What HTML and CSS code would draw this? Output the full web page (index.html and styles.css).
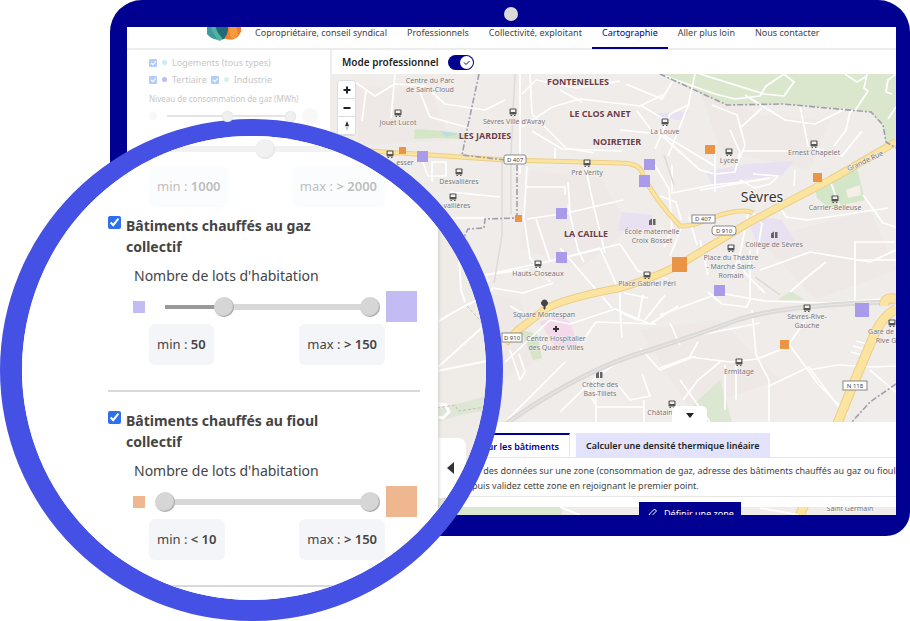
FILE: index.html
```html
<!DOCTYPE html>
<html lang="fr">
<head>
<meta charset="utf-8">
<title>Cartographie</title>
<link rel="stylesheet" href="styles.css">
</head>
<body>
<div class="stage">
  <div class="laptop">
    <span class="camera"></span>
    <div class="screen">
      <header class="header">
        <svg class="logo" viewBox="0 0 34 14" aria-hidden="true">
          <circle cx="12" cy="-2" r="15" fill="#3e9a9c"/>
          <circle cx="23" cy="1" r="11.500" fill="#f07f2c"/>
          <path d="M17-9A15 15 0 0 1 16 12.400A11.500 11.500 0 0 1 17-9" fill="#236a78"/>
          <path d="M24-4Q20 6 25 12A12 12 0 0 0 31 8L29-2" fill="#f59b3e"/>
          <path d="M6 0Q9 8 14 13" stroke="#4fb3a0" stroke-width="4" fill="none"/>
        </svg>
        <nav class="nav">
          <a href="#">Copropriétaire, conseil syndical</a>
          <a href="#">Professionnels</a>
          <a href="#">Collectivité, exploitant</a>
          <a href="#" class="current">Cartographie</a>
          <a href="#">Aller plus loin</a>
          <a href="#">Nous contacter</a>
        </nav>
      </header>
      <div class="workspace">
        <aside class="sidebar">
          <div class="checks">
            <label><input type="checkbox" checked><i class="dot sky"></i>Logements (tous types)</label>
          </div>
          <div class="checks">
            <label><input type="checkbox" checked><i class="dot indigo"></i>Tertiaire</label>
            <label><input type="checkbox" checked><i class="dot mint"></i>Industrie</label>
          </div>
          <p class="side-label">Niveau de consommation de gaz (MWh)</p>
          <div class="side-slider">
            <i class="ring small"></i>
            <div class="dual thin">
              <input type="range" aria-label="Consommation minimale" min="0" max="100" value="48">
              <input type="range" aria-label="Consommation maximale" min="0" max="100" value="100">
            </div>
            <i class="ring"></i>
          </div>
        </aside>
        <main class="main">
          <div class="mode">
            <label for="pro">Mode professionnel</label>
            <input id="pro" class="toggle" type="checkbox" role="switch" checked>
          </div>
          <section class="map">
            <svg class="map-art" viewBox="332 74 564 441" preserveAspectRatio="xMidYMid slice">
              <defs>
                <g id="bus"><rect x="-3.500" y="-3.500" width="7" height="6" rx="1" fill="#555"/><rect x="-2.300" y="-2.500" width="4.600" height="2.500" fill="#f3efea"/><path d="M-2.500 3.500h1.500M1 3.500h1.500" stroke="#555"/></g>
                <g id="school"><path d="M-3-1.500L0-3.500V3H-3zM1-3h2.500v6H1z" fill="#666"/></g>
              </defs>
              <rect x="332" y="74" width="564" height="441" fill="#f0ece9"/>
              <g fill="#eee8e6">
                <path d="M530 170l70 8 30 50-50 40-60-20zM700 90l60 25 70 5-20 50-90-20zM470 290l50 10 20 60-60 30zM640 330l80-10 60 60-90 30zM760 240l110-30 26 60-80 30zM350 85l80 5 20 50-90 5z"/>
              </g>
              <g fill="#e7e1f2">
                <path d="M706 172l40-8 48-3-12 14-40 5-28 8zM622 212l30 3 2 14-36 2zM757 216l25 4 13 22-36 6-8-20zM650 114l40-3-8 10z"/>
              </g>
              <path d="M540 322l20-7 11 8 7 25-20 3z" fill="#f3d9ea"/>
              <path d="M521 330l16 4 5 24-9 2z" fill="#d5e5c5"/>
              <path d="M658 74L727 105L783 104L871 112L883 125L886 142H896V74z" fill="#dae7cd"/>
              <path d="M814 184l42-20 9 36-36 8-12-10z" fill="#d3e7c8"/>
              <path d="M846 190l14-5 1 10-13 3z" fill="#f4f0e8"/>
              <path d="M415 129l28 2 24 3-8 5-20-1-25 1z" fill="#d5e6c6"/>
              <path d="M440 131l18 3-12 3z" fill="#bcdde0"/>
              <path d="M777 300l14-9 14 9zM693 405l27-25 12 42h-40zM332 500h230v15H332z" fill="#dbe7d0"/>

              <g fill="none" stroke="#fff" stroke-width="1.700" stroke-linejoin="round">
                <path d="M665 76l50 18 20 5 25-3 6-10 18-12 10 8-10 14-20-2-64-20-15-8M695 74l-7 32-20 50M845 74l12 8 10-6M867 74l-3 14 4 3-12 18-6 3-4 18-12 16M896 74l-8 6-2 12 6 2M896 107l-8 12"/>
                <path d="M355 82l20 14 20-12 30 2 20 18 40 6 20-10M366 91l-4 30M395 74l-4 44M420 92l10 25 36 10M520 74v100M522 94l14-14 40 8 44-7M522 127l30-20 28-8 60 7 25-12M530 74l2 40 34 34 28 5M532 131l30 18 60 2M560 90l22 12M626 84l36 15 12-20M640 105l22 13 3 18 50 30"/>
                <path d="M555 148v16M585 165l8 38 12 50M527 187h38v8M568 182l2 30M527 219l40-6 56-13M536 219l14 42M568 205l10 45 6 12M485 275l70-15 65-16M550 261l50-13M485 275l44-6M527 166l-3 52 6 40 20 24M420 154l8 22h18v-14h-14v20M430 218h55M450 192l50 5M560 248l52 60M600 248l20 45M620 244l18 27 30 8"/>
                <path d="M620 130l40 4 40 36 15 4 20-2 5-20-10-22M637 111l15 20 12 2M672 165v28l40-8 30-3M735 170l10-25-8-30-25-10M742 151h56M715 152v40M745 95l40 25 30 4 30-15M740 128l22-20M800 106l8 40 34 10 20-25M690 104l-20 10-15 35M795 170l-1 16M740 180l15 8 15-4 8-8-25-2M655 165l14 24 3 40-8 18M660 196l16 6 5 18M831 183l9 25M863 195l20 28 13 4M700 190l70-12"/>
                <path d="M735 253l10 20 20 20M774 197l12 20 22 3 80-12M748 214l-8 40-8 20M682 226l-12 30M697 245l-8-28M752 212l10 12-5 30M855 278V242h40M855 260h41M760 270l50-18 60 10 26-12M790 292l16-14 20-16M855 250v52M700 240l8 35M752 310l4 45 13 25v42M750 250v50l-4 8"/>
                <path d="M660 315l60-22 45 8 60 2 71-5M708 292l14 12 25 3M660 368l30-11 40 5 27-3 30-12 18-26M720 362l-22 18-15 20M698 342l-9 16M700 335l60-12M788 343l20 27 30-5 35 2 23-1M769 386l40-19 35 47M725 365v45M736 365v35M808 370l10 14 30 30M870 370l26 22M856 341l15 4M853 346l15 4M851 352l14 4"/>
                <path d="M510 350l10 30 5-8-6-18M505 362l45-42 20 4 45-15 35 15 28-18M596 322l60 2M596 322l-14 20M620 292v20l18 8 5-25M624 293l24 5M618 385l12 15 20-4-8-22M596 380v42M596 407h48M644 400v22M595 404l-10-20M560 412l36-35 30-20M505 422l60-60M640 348l20 22 36-14M645 320l20-25M510 306l14 8M680 380l30 42M680 345l-10-22M620 310l2 28"/>
                <path d="M473 310l20-22 30 5 30-10M440 300l50-20M340 509l80 4M560 507l20 8M760 508l40 7"/>
              </g>
              <g fill="none" stroke="#dedad8" stroke-width="1.500">
                <path d="M515 74l-4 80v60M502 160v75l-8 48M755 277l25 18M664 155l10 30"/>
              </g>
              <path d="M500 428Q580 370 650 350Q700 334 740 319Q790 304 896 302" fill="none" stroke="#dcdad9" stroke-width="5"/>
              <path d="M500 428Q580 370 650 350Q700 334 740 319Q790 304 896 302" fill="none" stroke="#ebe8e7" stroke-width="1"/>
              <g fill="none" stroke="#ebcf8a" stroke-linejoin="round">
                <path d="M370 151L430 155L505 160L620 163Q641 163 643 175Q655 200 680 226Q692 227 720 215Q745 208 753 213" stroke-width="5"/>
                <path d="M505 343L518 330L547 308Q570 297 620 288Q660 276 684 262L750 222L830 180L896 142" stroke-width="8"/>
                <path d="M896 309Q880 318 872 340L855 380L838 422L800 515M884 306q0-10 12-7" stroke-width="10"/>
              </g>
              <g fill="none" stroke="#fbe3a0" stroke-linejoin="round">
                <path d="M370 151L430 155L505 160L620 163Q641 163 643 175Q655 200 680 226Q692 227 720 215Q745 208 753 213" stroke-width="3"/>
                <path d="M505 343L518 330L547 308Q570 297 620 288Q660 276 684 262L750 222L830 180L896 142" stroke-width="6"/>
                <path d="M896 309Q880 318 872 340L855 380L838 422L800 515M884 306q0-10 12-7" stroke-width="8"/>
              </g>
              <g fill="none" stroke="#a29eac" stroke-width="1.600" stroke-dasharray="6 2 2 2">
                <path d="M479 74L467 130L462 155L505 160M517 165V218L485 219L484 228L468 229L460 245"/>
                <path d="M660 74L727 105L783 104L871 112L883 125L886 142L896 148M896 384L870 402L850 424"/>
              </g>

              <g class="road-tag">
                <rect x="504" y="155" width="22" height="9" rx="2"/><text x="515" y="162">D 407</text>
                <rect x="692" y="215" width="23" height="8"/><text x="703" y="221">D 407</text>
                <rect x="712" y="226" width="24" height="9" rx="3"/><text x="724" y="233">D 910</text>
                <rect x="502" y="333" width="20" height="9"/><text x="512" y="340">D 910</text>
                <rect x="843" y="381" width="24" height="9"/><text x="855" y="388">N 118</text>
              </g>

              <g fill="#a99bea">
                <path d="M417 151h11v11h-11zM644 159h11v11h-11zM639 175h11v12h-11zM556 208h11v11h-11zM556 252h11v11h-11zM714 285h11v11h-11zM855 303h14v14h-14z"/>
              </g>
              <g fill="#ea9445">
                <path d="M399 147h7v7h-7zM515 215h7v7h-7zM705 145h10v9h-10zM813 173h9v9h-9zM672 257h15v15h-15zM780 340h9v9h-9z"/>
              </g>

              <g>
                <use href="#bus" x="398" y="113"/><use href="#bus" x="513" y="112"/><use href="#bus" x="390" y="154"/>
                <use href="#bus" x="459" y="172"/><use href="#bus" x="453" y="197"/><use href="#bus" x="587" y="163"/>
                <use href="#bus" x="665" y="122"/><use href="#bus" x="729" y="152"/><use href="#bus" x="814" y="144"/>
                <use href="#bus" x="835" y="199"/><use href="#bus" x="731" y="248"/><use href="#bus" x="647" y="275"/>
                <use href="#bus" x="538" y="264"/><use href="#bus" x="807" y="308"/><use href="#bus" x="892" y="323"/>
                <use href="#bus" x="739" y="362"/><use href="#bus" x="672" y="404"/>
                <use href="#school" x="652" y="222"/><use href="#school" x="774" y="235"/><use href="#school" x="599" y="375"/>
                <path d="M544 309v-3a3 3 0 1 1 1 0v3z" fill="#444" stroke="#444"/>
                <path d="M553 329h6M556 326v6" stroke="#333" stroke-width="2"/>
              </g>

              <g class="place">
                <text x="430" y="83">Centre du Parc</text><text x="430" y="92">de Saint-Cloud</text>
                <text x="398" y="125">Jouet Lucot</text><text x="514" y="124">Sèvres Ville d'Avray</text>
                <text x="405" y="165">esser</text><text x="459" y="184">Desvallières</text><text x="457" y="208">vallières</text>
                <text x="587" y="175">Pré Verity</text><text x="665" y="134">La Louve</text><text x="729" y="163">Lycée</text>
                <text x="814" y="155">Ernest Chapelet</text><text x="835" y="210">Carrier-Belleuse</text>
                <text x="652" y="234">École maternelle</text><text x="652" y="243">Croix Bosset</text>
                <text x="774" y="247">Collège de Sèvres</text>
                <text x="731" y="260">Place du Théâtre</text><text x="731" y="269">- Marché Saint-</text><text x="731" y="278">Romain</text>
                <text x="647" y="286">Place Gabriel Péri</text><text x="538" y="276">Hauts-Closeaux</text>
                <text x="544" y="317">Square Montespan</text><text x="556" y="341">Centre Hospitalier</text><text x="556" y="350">des Quatre Villes</text>
                <text x="807" y="319">Sèvres-Rive-</text><text x="807" y="328">Gauche</text>
                <text x="881" y="334">Gare de</text><text x="886" y="343">Rive G</text>
                <text x="739" y="374">Ermitage</text><text x="600" y="387">Crèche des</text><text x="600" y="396">Bas-Tillets</text>
                <text x="660" y="415">Châtain</text><text x="850" y="511">Saint Germain</text>
                <text transform="translate(866 163) rotate(-25)">Grande Rue</text>
              </g>
              <g class="district">
                <text x="578" y="85">FONTENELLES</text><text x="600" y="117">LE CLOS ANET</text>
                <text x="485" y="139">LES JARDIES</text><text x="617" y="145">NOIRETIER</text><text x="586" y="237">LA CAILLE</text>
              </g>
              <text class="town" x="762" y="202">Sèvres</text>
            </svg>
            <div class="controls">
              <button type="button" aria-label="Zoom avant"><svg viewBox="0 0 10 10"><path d="M5 1.500v7M1.500 5h7"/></svg></button>
              <button type="button" aria-label="Zoom arrière"><svg viewBox="0 0 10 10"><path d="M1.500 5h7"/></svg></button>
              <button type="button" aria-label="Orienter au nord"><svg viewBox="0 0 10 10"><path class="needle" d="M5 0l2 5H3z"/><path class="needle pale" d="M5 10l2-5H3z"/></svg></button>
            </div>
            <div class="sheet">
              <button type="button" class="fold" aria-label="Replier"><svg viewBox="0 0 8 5"><path d="M0 0h8L4 5z"/></svg></button>
              <div class="tabs">
                <button type="button" class="tab active">sur les bâtiments</button>
                <button type="button" class="tab">Calculer une densité thermique linéaire</button>
              </div>
              <p class="help">er des données sur une zone (consommation de gaz, adresse des bâtiments chauffés au gaz ou fioul<br>puis validez cette zone en rejoignant le premier point.</p>
              <button type="button" class="define"><svg viewBox="0 0 10 10"><path d="M1 9l.5-3L6.500 1l2 2-5 5zM5 9h4.500"/></svg>Définir une zone</button>
            </div>
          </section>
        </main>
      </div>
    </div>
  </div>

  <div class="lens">
    <svg class="lens-map" viewBox="437 136 49 464" preserveAspectRatio="xMinYMin slice" aria-hidden="true">
      <rect x="437" y="136" width="49" height="379" fill="#efece8"/>
      <rect x="437" y="515" width="49" height="85" fill="#000091"/>
      <path d="M437 410l20-6 30-8v14l-30 6-20 6zM437 495h49v20h-49z" fill="#dfe6d6"/>
      <path d="M437 322l26-15 24-12M458 240l3 50 4 12M437 368l50-45M437 371l50-10" fill="none" stroke="#fff" stroke-width="2"/>
      <path d="M437 417l6 1 6-6-3-7-9-1" fill="none" stroke="#fff" stroke-width="3"/>
      <path d="M467 306l20 22M437 408l18-3 3 6 28-4" fill="none" stroke="#c4beb8" stroke-dasharray="3 2"/>
    </svg>
    <button type="button" class="drawer-handle" aria-label="Fermer le panneau"><svg viewBox="0 0 7 12"><path d="M7 0v12L0 6z"/></svg></button>
    <div class="drawer">
      <section class="group faded">
        <div class="slider">
          <i class="swatch"></i>
          <div class="dual">
            <input type="range" aria-label="Minimum gaz" min="0" max="100" value="49">
            <input type="range" aria-label="Maximum gaz" min="0" max="100" value="100">
          </div>
        </div>
        <div class="bounds"><span>min : <b>1000</b></span><span>max : <b>&gt; 2000</b></span></div>
      </section>
      <section class="group">
        <label class="title"><input type="checkbox" checked><span>Bâtiments chauffés au gaz collectif</span></label>
        <p class="caption">Nombre de lots d'habitation</p>
        <div class="slider violet">
          <i class="swatch"></i>
          <div class="dual">
            <span class="below"></span>
            <input type="range" aria-label="Minimum de lots, gaz" min="0" max="100" value="29">
            <input type="range" aria-label="Maximum de lots, gaz" min="0" max="100" value="100">
          </div>
          <i class="swatch large"></i>
        </div>
        <div class="bounds"><span>min : <b>50</b></span><span>max : <b>&gt; 150</b></span></div>
      </section>
      <section class="group">
        <label class="title"><input type="checkbox" checked><span>Bâtiments chauffés au fioul collectif</span></label>
        <p class="caption">Nombre de lots d'habitation</p>
        <div class="slider orange">
          <i class="swatch"></i>
          <div class="dual">
            <input type="range" aria-label="Minimum de lots, fioul" min="0" max="100" value="0">
            <input type="range" aria-label="Maximum de lots, fioul" min="0" max="100" value="100">
          </div>
          <i class="swatch large"></i>
        </div>
        <div class="bounds"><span>min : <b>&lt; 10</b></span><span>max : <b>&gt; 150</b></span></div>
      </section>
    </div>
  </div>
</div>
</body>
</html>
```
FILE: styles.css
```css
* { box-sizing: border-box; }
body { margin: 0; background: #fff; color: #444; font-family: "Noto Sans", "Open Sans", sans-serif; }
button, input { font: inherit; margin: 0; }
button { border: 0; padding: 0; background: #fff; color: inherit; }
p { margin: 0; }
a { color: inherit; text-decoration: none; }

.stage { position: relative; padding-left: 110px; min-height: 621px; overflow: hidden; }

/* Laptop */
.laptop { position: relative; border: solid #000091; border-width: 27px 14px 21px 17px; border-radius: 32px 32px 24px 24px; }
.camera { position: absolute; top: -20px; left: 50%; margin-left: -8px; width: 14px; height: 14px; border-radius: 50%; background: #dadada; }
.screen { overflow: hidden; background: #fff; }
.header { display: flex; gap: 14px; height: 23px; padding-left: 80px; border-bottom: 2px solid #ececec; }
.logo { width: 34px; height: 14px; flex: none; }
.nav { display: flex; gap: 20px; font-size: 9px; line-height: 12px; white-space: nowrap; }
.nav a { height: 22px; }
.nav .current { color: #000091; border-bottom: 2px solid #000091; padding: 0 10px; margin: 0 -10px; }

.workspace { display: flex; }
.sidebar { flex: 0 0 205px; min-width: 0; padding: 4px 12px 0 22px; border-right: 2px solid #eee; font-size: 9px; color: #c6c6c6; white-space: nowrap; }
.checks { display: flex; gap: 4px; height: 17px; }
.checks label { display: flex; align-items: center; gap: 5px; }
.checks input { appearance: none; width: 8px; height: 8px; border-radius: 1px; background: #b3cdfa; }
.checks input::after { content: ""; display: block; width: 4px; height: 2px; margin: 2px; border: solid #fff; border-width: 0 0 1px 1px; transform: rotate(-45deg); }
.dot { width: 5px; height: 5px; border-radius: 50%; }
.sky { background: #cdeafa; }
.indigo { background: #bcbcf3; }
.mint { background: #d3f2ee; }
.side-label { margin-top: 4px; font-size: 8px; line-height: 14px; }
.side-slider { display: flex; align-items: center; gap: 6px; margin-top: 2px; }
.ring { width: 16px; height: 16px; flex: none; border-radius: 50%; background: #f8f8f8; }
.ring.small { width: 8px; height: 8px; }

.main { flex: 1; min-width: 0; }
.mode { display: flex; align-items: center; gap: 9px; height: 24px; padding-left: 10px; font-size: 10px; font-weight: 600; color: #222; }
.toggle { appearance: none; width: 26px; height: 15px; border-radius: 8px; background: #000091 url("data:image/svg+xml,%3Csvg xmlns='http://www.w3.org/2000/svg' viewBox='0 0 26 15'%3E%3Ccircle cx='18.500' cy='7.500' r='6.500' fill='white'/%3E%3Cpath d='M16 7.500l2 2 3.500-3.500' fill='none' stroke='%23000091'/%3E%3C/svg%3E"); }

/* Map */
.map { position: relative; height: 441px; overflow: hidden; }
.map-art { display: block; width: 100%; height: 100%; }
.place { font-size: 7px; fill: #77747a; text-anchor: middle; stroke: #f7f4f1; stroke-width: 1px; paint-order: stroke; }
.district { font-size: 9px; font-weight: 700; fill: #6d4048; text-anchor: middle; stroke: #f7f4f1; stroke-width: 1px; paint-order: stroke; }
.town { font-size: 14px; fill: #333; text-anchor: middle; stroke: #f7f4f1; stroke-width: 2px; paint-order: stroke; }
.road-tag { font-size: 6px; fill: #444; text-anchor: middle; }
.road-tag rect { fill: #fff; stroke: #8a8a8a; stroke-width: 1px; }
.controls { position: absolute; left: 6px; top: 7px; width: 17px; border-radius: 3px; overflow: hidden; box-shadow: 0 0 0 1px #ddd; }
.controls button { display: flex; align-items: center; justify-content: center; width: 100%; height: 18px; border-bottom: 1px solid #ddd; }
.controls svg { width: 10px; height: 10px; fill: none; stroke: #222; stroke-width: 2px; }
.controls .needle { fill: #333; stroke: none; }
.controls .pale { fill: #ccc; }

.sheet { position: absolute; left: 0; right: 0; bottom: 8px; height: 85px; padding-top: 11px; background: #fff; }
.fold { position: absolute; left: 340px; top: -16px; width: 35px; height: 16px; border-radius: 5px 5px 0 0; }
.fold svg { display: block; width: 8px; height: 5px; margin: 2px auto 0; fill: #222; }
.tabs { display: flex; gap: 6px; padding-left: 130px; border-bottom: 1px solid #e6e6e6; }
.tab { height: 24px; padding: 0 10px; font-size: 9px; font-weight: 600; white-space: nowrap; background: #e3e3fd; color: #222; }
.tab.active { flex: 0 0 108px; text-align: right; background: #fff; color: #000091; border: solid #e6e6e6; border-width: 0 1px 0 0; border-top: 2px solid #000091; }
.help { padding: 5px 0 3px 140px; border-bottom: 1px solid #e6e6e6; font-size: 9px; line-height: 15px; white-space: nowrap; overflow: hidden; }
.define { position: absolute; left: 307px; top: 80px; display: flex; align-items: center; gap: 6px; width: 102px; height: 22px; padding-left: 9px; background: #000091; color: #fff; font-size: 9px; white-space: nowrap; }
.define svg { width: 10px; height: 10px; fill: none; stroke: #fff; }

/* Magnifier laid over the laptop */
.lens { position: absolute; left: 0; top: 119px; width: 503px; height: 502px; border: solid #4550e5; border-width: 17px 17px 21px 22px; border-radius: 50%; overflow: hidden; background: #fff; }
.lens-map { position: absolute; left: 415px; top: 0; width: 49px; height: 464px; }
.drawer-handle { position: absolute; left: 415px; top: 302px; width: 29px; height: 60px; border-radius: 0 8px 8px 0; }
.drawer-handle svg { display: block; width: 7px; height: 12px; margin-left: 10px; fill: #333; }
.drawer { position: relative; width: 416px; height: 100%; padding: 0 18px 0 86px; background: #fff; box-shadow: 0 0 4px #bbb; font-size: 13px; }
.group { padding-bottom: 25px; border-bottom: 2px solid #d9d9d9; }
.group + .group { padding-top: 18px; }
.group.faded { padding-bottom: 0; border: 0; }
.group.faded + .group { padding-top: 8px; }
.faded > * { opacity: 0.35; }
.faded .slider { height: 26px; margin: 0 0 4px 25px; }
.faded .bounds { margin-top: 0; }
.title { display: flex; gap: 5px; width: 230px; font-size: 14px; font-weight: 700; line-height: 21px; }
.title input { width: 13px; height: 13px; margin-top: 1px; flex: none; accent-color: #2f6fed; }
.caption { margin: 9px 0 0 26px; font-size: 14px; line-height: 20px; }
.slider { display: flex; align-items: center; height: 31px; margin: 5px 0 0 25px; }
.swatch { width: 12px; height: 12px; flex: none; }
.swatch.large { width: 31px; height: 31px; margin-left: 6px; }
.violet .swatch { background: #c3bbf3; }
.orange .swatch { background: #efb78f; }
.dual { position: relative; display: grid; width: 225px; height: 20px; margin-left: 10px; background: linear-gradient(#d8d8d8, #d8d8d8) 10px 7px / 205px 6px no-repeat; }
.dual input { grid-area: 1 / 1; appearance: none; width: 100%; height: 20px; background: none; pointer-events: none; z-index: 1; }
.dual input::-webkit-slider-thumb { appearance: none; width: 20px; height: 20px; border-radius: 50%; background: #d6d6d6; box-shadow: inset -1px -1px 1px #aaa; pointer-events: auto; }
.below { grid-area: 1 / 1; align-self: center; width: 60px; height: 6px; margin-left: 10px; border: solid #fff; border-width: 1px 0; background: #999; }
.dual.thin { flex: 1 1 0; width: auto; min-width: 0; grid-template-columns: minmax(0, 1fr); height: 12px; margin: 0; background: linear-gradient(#e4e4e4, #e4e4e4) 4px 5px / 126px 2px no-repeat; }
.dual.thin input { height: 12px; min-width: 0; }
.dual.thin input::-webkit-slider-thumb { width: 11px; height: 11px; background: #f0f0f0; box-shadow: inset 0 0 1px #ccc; }
.bounds { display: flex; justify-content: space-between; width: 236px; margin: 2px 0 0 41px; }
.bounds span { padding: 0 8px; border-radius: 6px; background: #f4f5f9; line-height: 41px; white-space: nowrap; }
.bounds b { font-weight: 600; }
```
